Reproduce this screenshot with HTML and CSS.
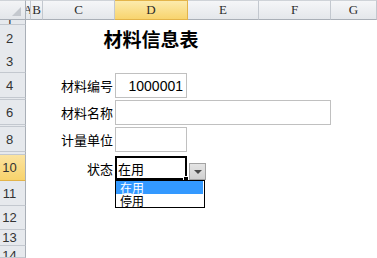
FILE: index.html
```html
<!DOCTYPE html>
<html lang="zh-CN">
<head>
    <meta charset="UTF-8">
    <title>材料信息表</title>
    <link rel="stylesheet" href="styles.css">
</head>
<body>
    <div class="sheet">
        <div class="row head">
            <div class="corner"><span class="tri"></span></div>
            <div class="ch">A</div>
            <div class="ch">B</div>
            <div class="ch">C</div>
            <div class="ch on">D</div>
            <div class="ch">E</div>
            <div class="ch">F</div>
            <div class="ch">G</div>
        </div>

        <div class="row r1"><div class="rh">1</div></div>
        <div class="row r2">
            <div class="rh">2</div>
            <div class="title">材料信息表</div>
        </div>
        <div class="row r3"><div class="rh">3</div></div>
        <div class="row r4">
            <div class="rh">4</div>
            <div class="label">材料编号</div>
            <div class="box col-d num">1000001</div>
        </div>
        <div class="row gap"><div class="rh"></div></div>
        <div class="row r4">
            <div class="rh">6</div>
            <div class="label">材料名称</div>
            <div class="box col-df"></div>
        </div>
        <div class="row gap"><div class="rh"></div></div>
        <div class="row r4">
            <div class="rh">8</div>
            <div class="label">计量单位</div>
            <div class="box col-d"></div>
        </div>
        <div class="row gap gap3"><div class="rh"></div></div>
        <div class="row r10">
            <div class="rh on">10</div>
            <div class="label">状态</div>
            <div class="sel">
                在用
                <span class="handle"></span>
                <span class="dd-btn"><span class="arrow"></span></span>
                <ul class="dd-list">
                    <li class="active">在用</li>
                    <li>停用</li>
                </ul>
            </div>
        </div>
        <div class="row r4"><div class="rh">11</div></div>
        <div class="row r12"><div class="rh">12</div></div>
        <div class="row r13"><div class="rh">13</div></div>
        <div class="row r14"><div class="rh">14</div></div>
    </div>
</body>
</html>
```

FILE: styles.css
```css
body {
    margin: 0;
    background: #fff;
    font-family: "Noto Sans CJK SC", sans-serif;
    color: #000;
}
.sheet {
    width: 377px;
    height: 258px;
    overflow: hidden;
}
.row {
    display: grid;
    grid-template-columns: 26px 5px 12px 72px 73px 71px 72px 1fr;
}
.head {
    height: 20px;
}
.corner {
    display: flex;
    align-items: flex-end;
    justify-content: flex-end;
    padding: 0 4px 3px 0;
    background: linear-gradient(#f3f4f6, #e3e6ea);
    border-right: 1px solid #a9afb7;
    border-bottom: 1px solid #a9afb7;
    border-top: 1px solid #cfd3d8;
}
.tri {
    width: 0;
    height: 0;
    border-left: 9px solid transparent;
    border-bottom: 9px solid #c4c8ce;
}
.ch {
    overflow: hidden;
    display: flex;
    justify-content: center;
    align-items: center;
    font-family: "Liberation Serif", serif;
    font-size: 13px;
    color: #2c2c2c;
    background: linear-gradient(#f5f6f8, #e4e7eb);
    border-top: 1px solid #cfd3d8;
    border-right: 1px solid #c3c8cf;
    border-bottom: 1px solid #a9afb7;
}
.ch.on {
    background: linear-gradient(#fcebad, #f8d46e);
    border-color: #e3b44a;
}
.rh {
    grid-column: 1;
    overflow: hidden;
    display: flex;
    align-items: center;
    justify-content: center;
    padding-right: 6px;
    font-family: "Liberation Sans", sans-serif;
    font-size: 13px;
    color: #333;
    background: #e6e9ed;
    border-right: 1px solid #a9afb7;
    border-bottom: 1px solid #c3c8cf;
}
.rh.on {
    background: linear-gradient(#fbe3a0, #f8d36c);
    border-bottom-color: #e3b44a;
}
.r1 { height: 5px; }
.r1 .rh { align-items: flex-end; line-height: 4px; }
.r2 { height: 25px; }
.r3 { height: 23px; }
.r4 { height: 25px; }
.gap { height: 2px; }
.gap3 { height: 3px; }
.r10 { height: 26px; }
.r12 { height: 24px; }
.r13 { height: 16px; }
.r14 { height: 12px; }
.r14 .rh { align-items: flex-start; padding-top: 2px; }

.title {
    grid-column: 4 / 7;
    display: flex;
    align-items: center;
    justify-content: center;
    font-size: 19px;
    font-weight: 700;
}
.label {
    grid-column: 4;
    display: flex;
    align-items: center;
    justify-content: flex-end;
    padding-right: 2px;
    font-size: 13px;
}
.box {
    border: 1px solid #c0c0c0;
    display: flex;
    align-items: center;
    justify-content: flex-end;
    padding-right: 3px;
}
.col-d { grid-column: 5; margin-right: 1px; }
.col-df { grid-column: 5 / 8; }
.num {
    font-family: "Liberation Sans", sans-serif;
    font-size: 14px;
}
.sel {
    grid-column: 5;
    position: relative;
    margin: 1px 1px 1px 0;
    border: 2px solid #000;
    padding-left: 1px;
    display: flex;
    align-items: center;
    font-size: 13px;
}
.handle {
    position: absolute;
    right: -4px;
    bottom: -4px;
    width: 4px;
    height: 4px;
    background: #000;
    border: 1px solid #fff;
}
.dd-btn {
    position: absolute;
    left: 72px;
    top: 5px;
    width: 17px;
    height: 17px;
    box-sizing: border-box;
    border: 1px solid #a3a3a3;
    background: linear-gradient(#e4e4e4, #d0d0d0);
    display: flex;
    align-items: center;
    justify-content: center;
}
.arrow {
    width: 0;
    height: 0;
    border-left: 4px solid transparent;
    border-right: 4px solid transparent;
    border-top: 4px solid #4a4a4a;
}
.dd-list {
    position: absolute;
    left: -2px;
    top: 22px;
    width: 90px;
    box-sizing: border-box;
    margin: 0;
    padding: 0;
    list-style: none;
    background: #fff;
    border: 1px solid #000;
    font-size: 12px;
    line-height: 13px;
}
.dd-list li {
    height: 13px;
    padding-left: 4px;
    margin-right: 1px;
}
.dd-list li.active {
    background: #3399ff;
    color: #fff;
}
```
